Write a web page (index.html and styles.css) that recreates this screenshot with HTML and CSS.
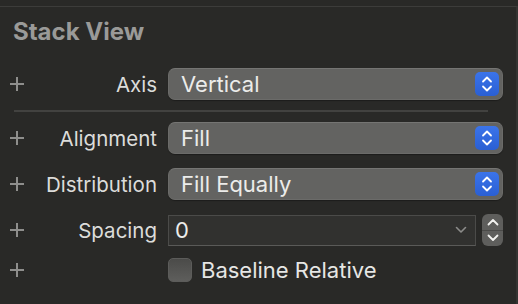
FILE: index.html
```html
<!DOCTYPE html>
<html lang="en">
<head>
  <meta charset="UTF-8" />
  <title>Stack View</title>
  <link rel="stylesheet" href="styles.css">
</head>
<body>

<div class="inspector">
  <h2 class="title">Stack View</h2>

  <div class="row row-axis">
    <span class="plus"></span>
    <label class="label">Axis</label>
    <div class="popup">
      <span>Vertical</span>
      <span class="popup-btn">
        <svg width="12" height="18" viewBox="0 0 12 18"><path d="M2 6.5 L6 2.5 L10 6.5 M2 11.5 L6 15.5 L10 11.5" fill="none" stroke="#fff" stroke-width="1.8" stroke-linecap="round" stroke-linejoin="round"/></svg>
      </span>
    </div>
  </div>

  <hr class="sep">

  <div class="row row-align">
    <span class="plus"></span>
    <label class="label">Alignment</label>
    <div class="popup">
      <span>Fill</span>
      <span class="popup-btn">
        <svg width="12" height="18" viewBox="0 0 12 18"><path d="M2 6.5 L6 2.5 L10 6.5 M2 11.5 L6 15.5 L10 11.5" fill="none" stroke="#fff" stroke-width="1.8" stroke-linecap="round" stroke-linejoin="round"/></svg>
      </span>
    </div>
  </div>

  <div class="row row-dist">
    <span class="plus"></span>
    <label class="label">Distribution</label>
    <div class="popup">
      <span>Fill Equally</span>
      <span class="popup-btn">
        <svg width="12" height="18" viewBox="0 0 12 18"><path d="M2 6.5 L6 2.5 L10 6.5 M2 11.5 L6 15.5 L10 11.5" fill="none" stroke="#fff" stroke-width="1.8" stroke-linecap="round" stroke-linejoin="round"/></svg>
      </span>
    </div>
  </div>

  <div class="row row-spacing">
    <span class="plus"></span>
    <label class="label">Spacing</label>
    <div class="spacing">
      <div class="field">
        <span>0</span>
        <svg width="12" height="8" viewBox="0 0 12 8"><path d="M1.5 1.5 L6 6 L10.5 1.5" fill="none" stroke="#8c8c8a" stroke-width="1.6" stroke-linecap="round" stroke-linejoin="round"/></svg>
      </div>
      <div class="stepper">
        <span class="step">
          <svg width="12" height="8" viewBox="0 0 12 8"><path d="M1.5 6.5 L6 2 L10.5 6.5" fill="none" stroke="#f2f2f0" stroke-width="1.8" stroke-linecap="round" stroke-linejoin="round"/></svg>
        </span>
        <span class="step">
          <svg width="12" height="8" viewBox="0 0 12 8"><path d="M1.5 1.5 L6 6 L10.5 1.5" fill="none" stroke="#f2f2f0" stroke-width="1.8" stroke-linecap="round" stroke-linejoin="round"/></svg>
        </span>
      </div>
    </div>
  </div>

  <div class="row row-check">
    <span class="plus"></span>
    <span class="label"></span>
    <div class="check">
      <span class="box"></span>
      <span>Baseline Relative</span>
    </div>
  </div>
</div>

</body>
</html>
```

FILE: styles.css
```css
body {
  margin: 0;
  background-color: #292927;
  font-family: "Inter", "Liberation Sans", sans-serif;
  color: #e2e2e0;
  overflow: hidden;
}
.inspector {
  height: 298px;
  margin-top: 6px;
  border-top: 1px solid #3c3c3a;
  border-right: 2px solid #343432;
  box-sizing: border-box;
  width: 518px;
  padding-right: 13px;
}
.title {
  margin: 0;
  padding: 11px 0 0 13px;
  font-size: 24px;
  font-weight: 700;
  line-height: 28px;
  color: #9a9a98;
}
.row {
  display: grid;
  grid-template-columns: 30px 116px 1fr;
  column-gap: 11px;
  align-items: center;
  font-size: 22px;
}
.row-axis { margin-top: 22px; }
.row-align { margin-top: 10px; }
.row-dist { margin-top: 14px; }
.row-spacing { margin-top: 14px; }
.row-check { margin-top: 8px; height: 32px; }
.plus {
  position: relative;
  width: 14px;
  height: 14px;
  margin-left: 10px;
}
.plus::before,
.plus::after {
  content: "";
  position: absolute;
  background-color: #8e8e8c;
}
.plus::before {
  left: 0;
  top: 6px;
  width: 14px;
  height: 2px;
}
.plus::after {
  left: 6px;
  top: 0;
  width: 2px;
  height: 14px;
}
.label {
  text-align: right;
  font-size: 20.5px;
  color: #dcdcda;
}
.sep {
  margin: 10px 15px 0 14px;
  border: 0;
  height: 2px;
  background-color: #424240;
}
.popup {
  display: flex;
  align-items: center;
  justify-content: space-between;
  height: 32px;
  box-sizing: border-box;
  padding: 0 3px 0 12px;
  background-color: #636361;
  border: 1px solid #6b6b69;
  border-top-color: #757573;
  border-radius: 7px;
  color: #ececea;
  box-shadow: 0 1px 1px rgba(0, 0, 0, 0.3);
}
.popup-btn {
  display: flex;
  align-items: center;
  justify-content: center;
  width: 24px;
  height: 24px;
  border-radius: 5px;
  background: linear-gradient(#3b74ea, #2a5fd3);
}
.spacing {
  display: flex;
  align-items: center;
  gap: 6px;
}
.field {
  flex: 1;
  display: flex;
  align-items: center;
  justify-content: space-between;
  height: 31px;
  box-sizing: border-box;
  padding: 0 8px 0 6px;
  background-color: #31312f;
  border: 1px solid #4b4b49;
  border-bottom-color: #5a5a58;
  color: #ececea;
}
.stepper {
  display: flex;
  flex-direction: column;
  width: 21px;
  height: 32px;
  border-radius: 6px;
  background-color: #5e5e5c;
  overflow: hidden;
}
.step {
  flex: 1;
  display: flex;
  align-items: center;
  justify-content: center;
}
.step + .step {
  border-top: 1px solid #4a4a48;
}
.check {
  display: flex;
  align-items: center;
  gap: 9px;
  color: #e6e6e4;
}
.box {
  width: 24px;
  height: 24px;
  box-sizing: border-box;
  border-radius: 5px;
  border: 1px solid #5c5c5a;
  background: linear-gradient(#4b4b49, #5e5e5c);
}
```
